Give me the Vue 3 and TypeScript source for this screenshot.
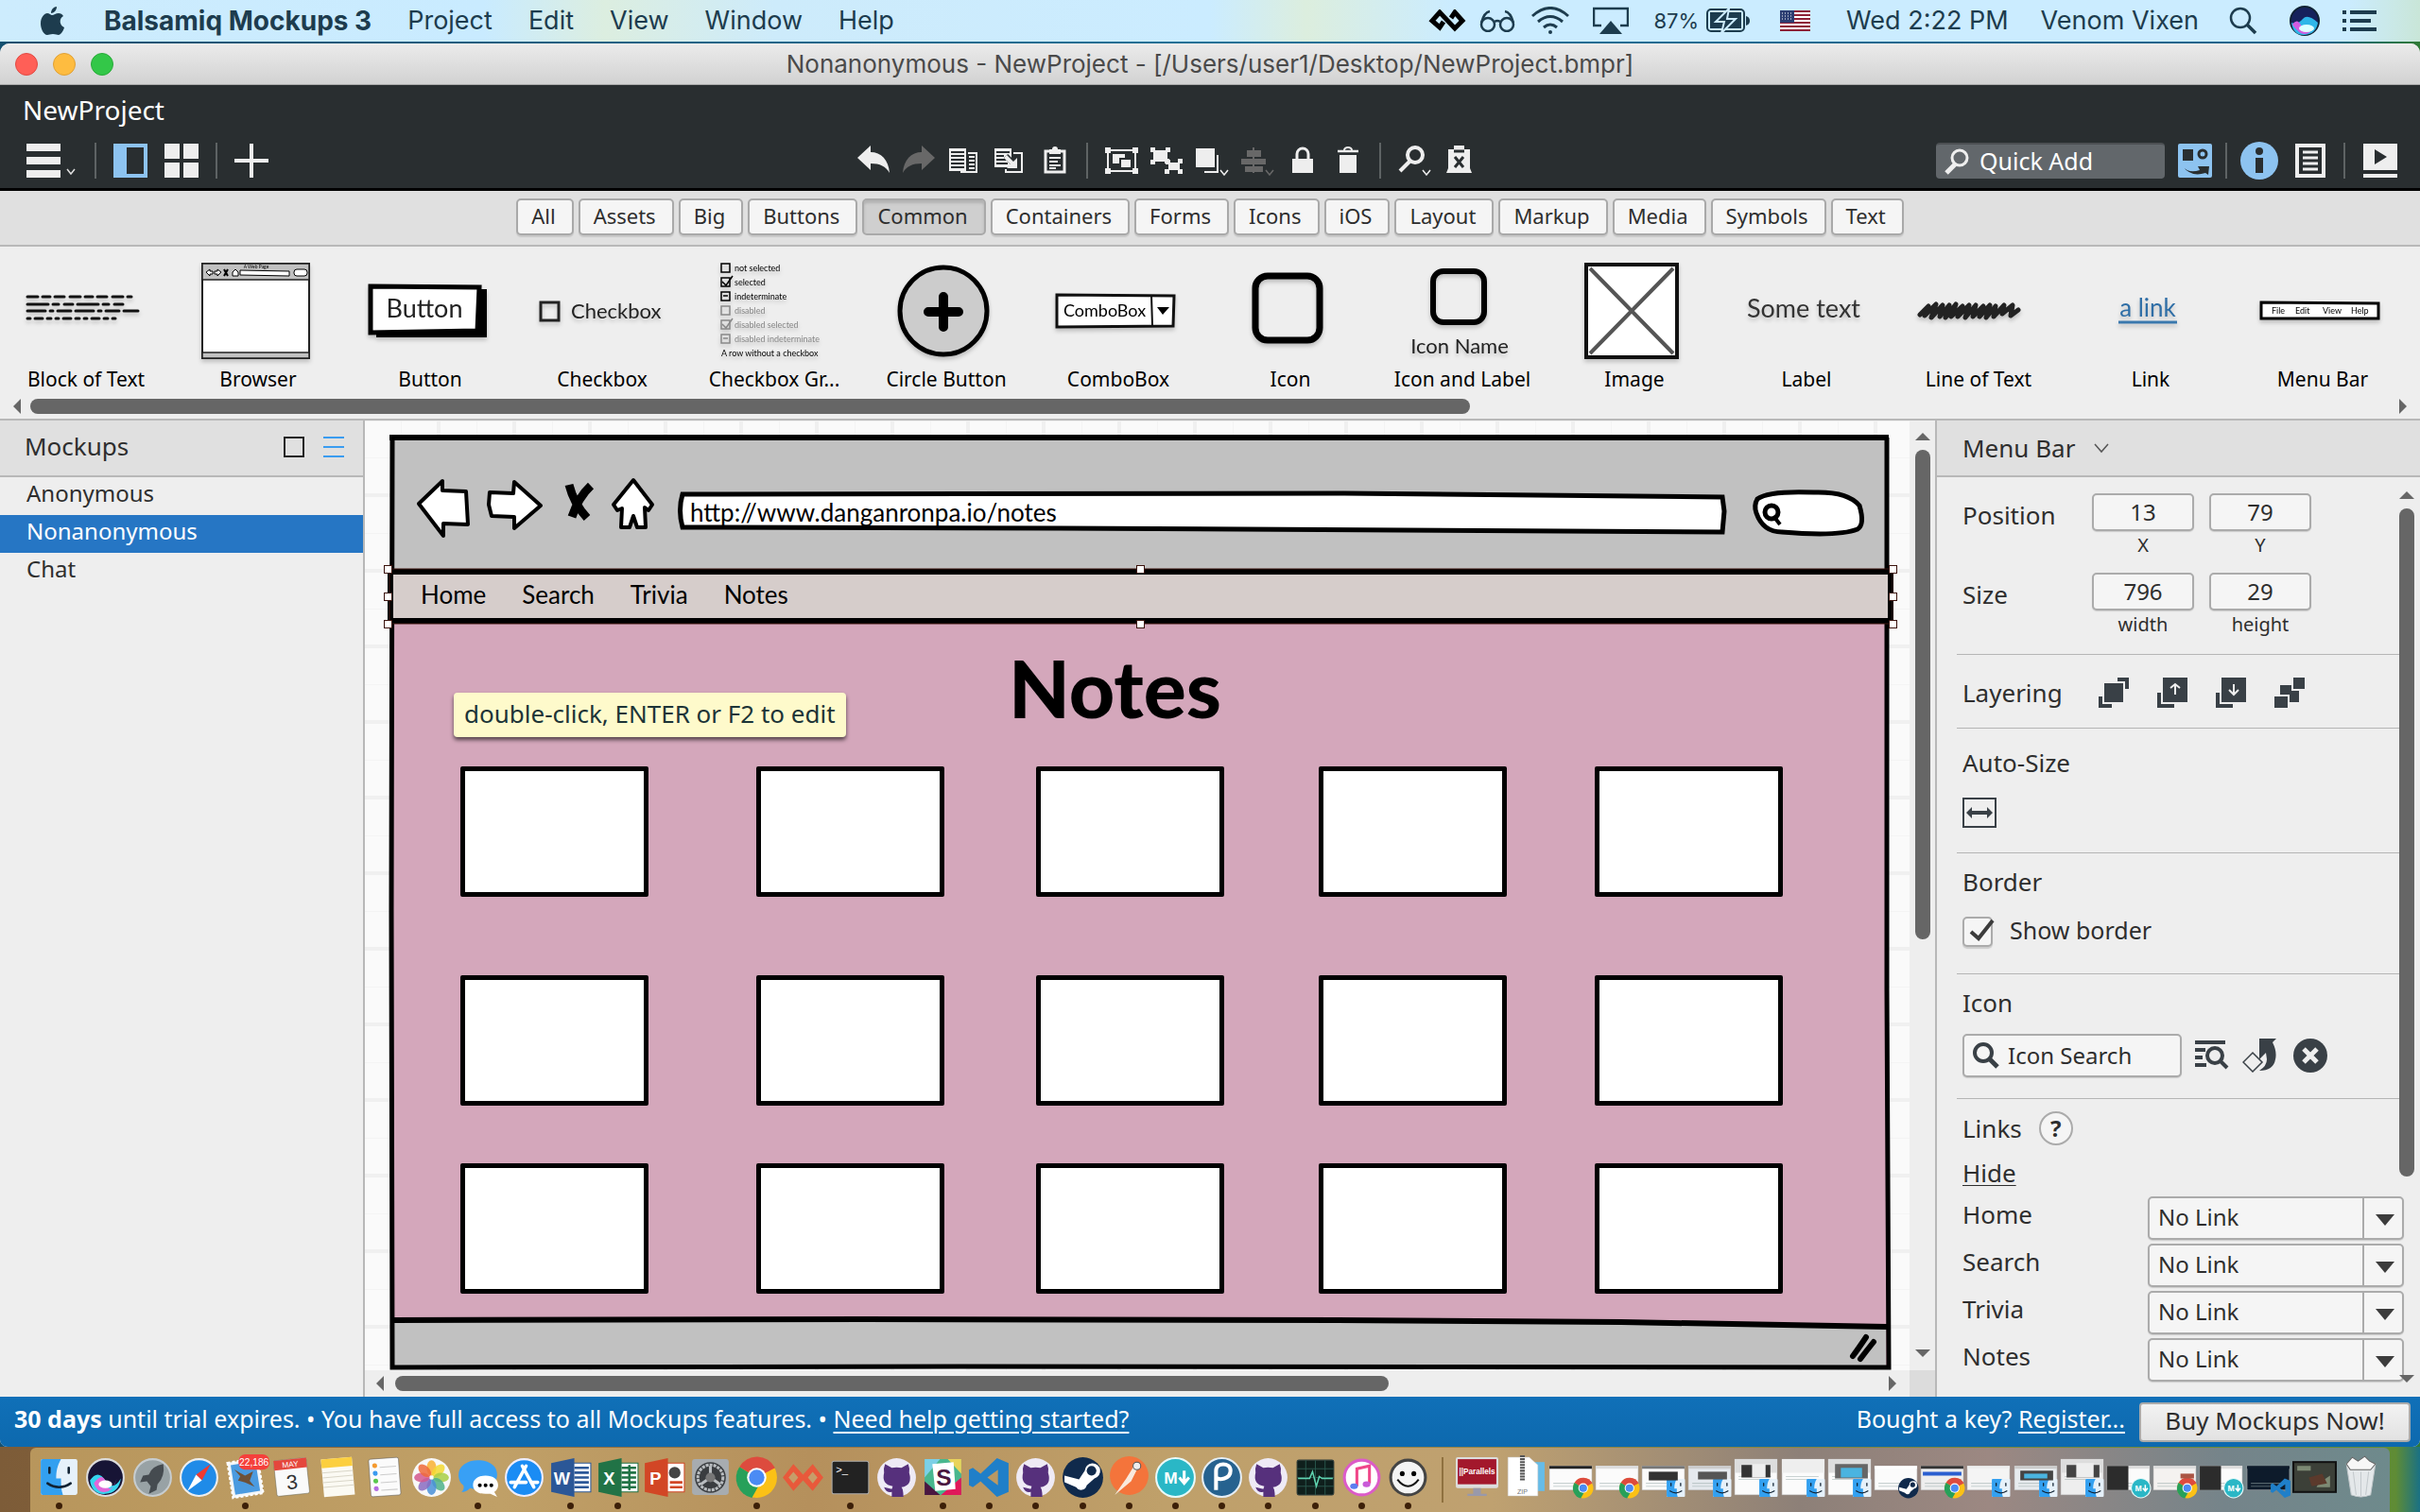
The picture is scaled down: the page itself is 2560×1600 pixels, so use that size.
<script setup lang="ts">
import { ref } from 'vue'

interface DockItem {
  art: string
  name: string
  running?: boolean
}

const systemMenus = ['Project', 'Edit', 'View', 'Window', 'Help']

const categories = [
  'All', 'Assets', 'Big', 'Buttons', 'Common', 'Containers', 'Forms', 'Icons',
  'iOS', 'Layout', 'Markup', 'Media', 'Symbols', 'Text',
]
const activeCategory = ref('Common')

const mockups = ['Anonymous', 'Nonanonymous', 'Chat']
const activeMockup = ref('Nonanonymous')

const position = ref({ x: '13', y: '79' })
const size = ref({ width: '796', height: '29' })
const showBorder = ref(true)
const iconQuery = ref('')
const quickAdd = ref('')

const pageLinks = ['Home', 'Search', 'Trivia', 'Notes']
const linkTargets = ref<Record<string, string>>({
  Home: 'No Link', Search: 'No Link', Trivia: 'No Link', Notes: 'No Link',
})

/* Positions on the free drawing canvas */
const cardColumns = [75, 388, 684, 983, 1275]
const cardRows = [351, 572, 771]
const cards = cardRows.flatMap((top) => cardColumns.map((left) => ({ left, top })))
const handles = [
  [-6, 138], [790, 138], [1586, 138],
  [-6, 167], [1586, 167],
  [-6, 196], [790, 196], [1586, 196],
]

const chevron = '<path d="M0 0l4 5 4-5" transform="translate(27 26)" fill="none" stroke="currentColor" stroke-width="1.5"/>'

const editTools: { name: string; art: string; dim?: boolean }[][] = [
  [
    { name: 'Undo', art: '<path d="M1 13L15 0v7c11 0 19 8 20 22-4-7-10-10-20-10v7z" fill="currentColor"/>' },
    { name: 'Redo', dim: true, art: '<path d="M35 13L21 0v7C10 7 2 15 1 29c4-7 10-10 20-10v7z" fill="currentColor"/>' },
    { name: 'Copy', art: '<path d="M2 3h18v24H2z" fill="currentColor"/><path d="M4 7h14M4 11h14M4 15h14M4 19h14M4 23h14" stroke="#292e30" stroke-width="2"/><path d="M22 8h9v20H14" fill="none" stroke="currentColor" stroke-width="2"/><path d="M23 12h6M23 16h6M23 20h6M23 24h6" stroke="currentColor" stroke-width="2"/>' },
    { name: 'Duplicate', art: '<path d="M2 3h18v20H2z" fill="currentColor"/><path d="M4 7h14M4 11h8M4 15h10M4 19h12" stroke="#292e30" stroke-width="2"/><path d="M22 8h9v20H14v-3" fill="none" stroke="currentColor" stroke-width="2"/><path d="M14 11l9 9" stroke="#292e30" stroke-width="6"/><path d="M26 13v11H15l4-4-7-7 3-3 7 7z" fill="currentColor"/>' },
    { name: 'Paste', art: '<path d="M8 6h20v22H8z" fill="none" stroke="currentColor" stroke-width="3"/><path d="M12 4h3a3 3 0 0 1 6 0h3v5H12z" fill="currentColor"/><path d="M12 13h12M12 17h9M12 21h12M12 24h7" stroke="currentColor" stroke-width="2"/>' },
  ],
  [
    { name: 'Group', art: '<path d="M4 5h29v22H4z" fill="none" stroke="currentColor" stroke-width="2"/><path d="M1 2h6v6H1zM30 2h6v6h-6zM1 24h6v6H1zM30 24h6v6h-6z" fill="currentColor"/><path d="M9 9h13v10H9z" fill="currentColor"/><path d="M17 14h12v10H17z" fill="currentColor" stroke="#292e30" stroke-width="2"/>' },
    { name: 'Ungroup', art: '<path d="M4 5h15v12H4z" fill="currentColor"/><path d="M1 2h5v5H1zM17 2h5v5h-5zM1 15h5v5H1zM17 15h5v5h-5z" fill="currentColor"/><path d="M20 18h12v8H20z" fill="currentColor"/><path d="M16 14h5v5h-5zM30 14h5v5h-5zM16 25h5v5h-5zM30 25h5v5h-5z" fill="currentColor"/>' },
    { name: 'Bring forward', art: '<path d="M1 3h20v20H1z" fill="currentColor"/><path d="M24 10v18H10" fill="none" stroke="currentColor" stroke-width="2"/>' + chevron },
    { name: 'Align', dim: true, art: '<path d="M7 5h15v7H7zM1 14h26v6H1zM5 22h19v6H5z" fill="currentColor"/><path d="M14 2v27" stroke="currentColor" stroke-width="2"/>' + chevron },
    { name: 'Lock', art: '<path d="M7 14h22v15H7z" fill="currentColor"/><path d="M12 15V9a6 6 0 0 1 12 0v6" fill="none" stroke="currentColor" stroke-width="3"/>' },
    { name: 'Delete', art: '<path d="M7 6h22" stroke="currentColor" stroke-width="2.500"/><path d="M14 5a4 3 0 0 1 8 0" fill="none" stroke="currentColor" stroke-width="2"/><path d="M9 10h18v19H9z" fill="currentColor"/>' },
  ],
  [
    { name: 'Zoom', art: '<circle cx="19" cy="10" r="8" fill="none" stroke="currentColor" stroke-width="4"/><path d="M13 17L3 27" stroke="currentColor" stroke-width="4"/>' + chevron },
    { name: 'Clear markup', art: '<path d="M6 4h23v20l2 5H4l2-5z" fill="currentColor"/><path d="M12 0h11v6H12z" fill="currentColor"/><path d="M12 6h11M13 12l9 11M22 12l-9 11" stroke="#292e30" stroke-width="3"/>' },
  ],
]

const box = (x: number, y: number, c: string) =>
  `<rect x="${x}" y="${y}" width="9" height="9" fill="none" stroke="${c}" stroke-width="1.500"/>`
const groupRows = [
  ['not selected', '#000', ''],
  ['selected', '#000', 'M11 8l4 4 7-10'],
  ['indeterminate', '#000', 'M12 8h5'],
  ['disabled', '#888', ''],
  ['disabled selected', '#888', 'M11 8l4 4 7-10'],
  ['disabled indeterminate', '#888', 'M12 8h5'],
]
const checkboxGroup = groupRows
  .map(([t, c, mark], i) =>
    `<g transform="translate(0 ${i * 15})">${box(10, 4, c)}<path d="${mark}" fill="none" stroke="${c}" stroke-width="1.500"/><text x="24" y="12" font-size="9" fill="${c}">${t}</text></g>`)
  .join('') + '<text x="10" y="102" font-size="9">A row without a checkbox</text>'

const library = [
  { name: 'Block of Text', art: '<g fill="none" stroke="#111" stroke-width="3" stroke-linecap="round"><path stroke-dasharray="11 5 8 5 10 6" d="M4 39h110"/><path stroke-dasharray="22 5 6 6 9 5" d="M4 47h105"/><path stroke-dasharray="19 5 3 5 14 5" d="M4 54h117"/><path stroke-dasharray="3 5 8 5 4 5" d="M4 62h96"/></g>' },
  { name: 'Browser', art: '<path d="M7 4h113v100H7z" fill="#fff" stroke="#222" stroke-width="2"/><path d="M7 4h113v17H7zM7 98h113v6H7z" fill="#c1c1c1" stroke="#222" stroke-width="1.500"/><text x="64" y="9" font-size="5" text-anchor="middle">A Web Page</text><path d="M11 13l4-3v2h3v3h-3v2zM27 13l-4-3v2h-3v3h3v2zM39 17v-4l3-3 3 3v4z" fill="#fff" stroke="#000"/><path d="M30 10l4 7M34 10l-4 7" stroke="#000" stroke-width="2"/><path d="M47 11l52 1v5l-52-1z" fill="#fff" stroke="#000"/><rect x="104" y="10" width="14" height="7" rx="3" fill="#fff" stroke="#000"/>' },
  { name: 'Button', art: '<path d="M120 31h6v51H9v-6z" fill="#000"/><path d="M3 28l115 1-2 46L3 77z" fill="#fff" stroke="#000" stroke-width="5"/><text x="60" y="61" font-size="27" text-anchor="middle" fill="#222">Button</text>' },
  { name: 'Checkbox', art: '<rect x="1" y="45" width="19" height="19" fill="none" stroke="#222" stroke-width="3"/><text x="33" y="62" font-size="22" fill="#222">Checkbox</text>' },
  { name: 'Checkbox Gr...', art: checkboxGroup },
  { name: 'Circle Button', art: '<circle cx="63" cy="54" r="46" fill="#ccc" stroke="#000" stroke-width="5"/><path d="M63 39v32M47 55h32" stroke="#000" stroke-width="10" stroke-linecap="round"/>' },
  { name: 'ComboBox', art: '<path d="M1 37l124 1-1 32L1 71z" fill="#fff" stroke="#111" stroke-width="3"/><path d="M101 37l1 33" stroke="#111" stroke-width="2"/><path d="M107 50h13l-7 8z"/><text x="8" y="60" font-size="18">ComboBox</text>' },
  { name: 'Icon', art: '<rect x="29" y="17" width="68" height="68" rx="13" fill="none" stroke="#000" stroke-width="7"/>' },
  { name: 'Icon and Label', art: '<rect x="35" y="12" width="54" height="54" rx="11" fill="none" stroke="#000" stroke-width="6"/><text x="63" y="99" font-size="22" text-anchor="middle" fill="#222">Icon Name</text>' },
  { name: 'Image', art: '<path d="M15 5h96v98H15z" fill="#fff" stroke="#111" stroke-width="4"/><path d="M19 9l88 90M107 9L19 99" stroke="#555" stroke-width="4"/>' },
  { name: 'Label', art: '<text x="63" y="61" font-size="27" text-anchor="middle" fill="#333">Some text</text>' },
  { name: 'Line of Text', art: '<path d="M4 58l9-9-4 10 12-12-5 14 12-13-3 12 10-12-4 13 11-14-5 13 12-11-5 11 12-12-4 13 11-13-3 12 11-11-4 11 11-12-4 13 10-12-2 11 11-12-2 9 11-9-2 11 8-6" fill="none" stroke="#222" stroke-width="5" stroke-linejoin="round" stroke-linecap="round"/>' },
  { name: 'Link', art: '<text x="63" y="60" font-size="26" text-anchor="middle" fill="#2f6ea6">a link</text><path d="M32 66h62" stroke="#3a78ad" stroke-width="3"/>' },
  { name: 'Menu Bar', art: '<path d="M1 45l124 1v16H1z" fill="#fff" stroke="#000" stroke-width="3"/><g font-size="9"><text x="12" y="57">File</text><text x="37" y="57">Edit</text><text x="66" y="57">View</text><text x="96" y="57">Help</text></g>' },
]

/* Dock artwork, each on a 48 x 48 grid */
const petals = ['#f9b233', '#f3d930', '#a8cf45', '#4db28a', '#4a90d9', '#8a6bc1', '#d4588e', '#ef6a3a']
  .map((c, i) => `<ellipse cx="24" cy="14" rx="5" ry="8" fill="${c}" opacity=".85" transform="rotate(${i * 45} 24 24)"/>`)
  .join('')
const chromeArt = '<circle cx="24" cy="24" r="21" fill="#fbc116"/><path d="M24 24L6 13A21 21 0 0 1 43 14z" fill="#dd4b3e"/><path d="M24 24L6 13a21 21 0 0 0 13 32l9-16z" fill="#27a05a"/><circle cx="24" cy="24" r="10" fill="#fff"/><circle cx="24" cy="24" r="8" fill="#4b8bf4"/>'
const finderArt = '<rect x="5" y="5" width="38" height="37" rx="2" fill="#e6f1fa"/><path d="M7 5h19c-4 7-5 13-5 20h5c0 6 0 12 2 17H7a2 2 0 0 1-2-2V7a2 2 0 0 1 2-2z" fill="#33a0f0"/><path d="M14 14v5M34 14v5M12 30q12 8 24 0" fill="none" stroke="#123" stroke-width="2.500" stroke-linecap="round"/>'
const githubArt = '<circle cx="24" cy="24" r="20" fill="#eeeaf5"/><path d="M12 10l7 4q5-1 10 0l7-4q2 5 1 9 4 13-8 15 2 2 2 10H19v-5q-6 1-8-5l8 2 1-3q-12-2-9-14-1-4 1-9z" fill="#56307c"/>'
const office = (letter: string, c: string, lines: string) =>
  `<path d="M26 9h19v30H26z" fill="#fff" stroke="${c}"/><path d="${lines}" stroke="${c}" stroke-width="2.500"/><path d="M4 9l24-5v40L4 39z" fill="${c}"/><text x="15" y="31" font-size="18" font-weight="700" text-anchor="middle" fill="#fff">${letter}</text>`
const steamArt = '<circle cx="24" cy="24" r="21" fill="#102a4c"/><path d="M5 29l12 5a6 6 0 0 0 11-2l8-7a8 8 0 1 0-10-8l-6 9-15-4z" fill="#fff"/><circle cx="33" cy="17" r="5" fill="#102a4c"/>'
const vsArt = '<path d="M32 4l12 5v30l-12 5L15 28l-8 6-4-2V16l4-2 8 6zM33 16l-11 8 11 8z" fill="#1f7fc9" fill-rule="evenodd"/>'
const mdArt = '<circle cx="24" cy="24" r="20" fill="#2ab7c6" stroke="#e8fafa" stroke-width="2"/><text x="19" y="30" font-size="17" font-weight="700" text-anchor="middle" fill="#fff">M</text><path d="M33 17v11M28 24l5 6 5-6" fill="none" stroke="#fff" stroke-width="3"/>'

const badge = (kind: string) => `<g transform="translate(25 23) scale(.5)">${kind}</g>`
const windowArt = (paper: string, head: string, kind: string, tall = false) => {
  const y = tall ? 5 : 12
  const h = tall ? 37 : 25
  return `<rect x="2" y="${y}" width="44" height="${h}" fill="${paper}" stroke="#bbb" stroke-width=".500"/><path d="M2 ${y}h44v${tall ? 14 : 3}H2z" fill="${head}"/><path d="M6 ${y + 18}h34M6 ${y + 21}h26" stroke="#9aa" stroke-width="1" opacity=".5"/>${badge(kind)}`
}

const apps: DockItem[] = [
  { name: 'Finder', art: finderArt, running: true },
  { name: 'Siri', art: '<circle cx="24" cy="24" r="19" fill="#171435" stroke="#ddd" stroke-width="2"/><path d="M8 27q8-12 16 0t16-2q-2 15-16 16T8 27z" fill="#35d5ee"/><path d="M12 30q9-13 13 0t11-5q-4 13-12 14T12 30z" fill="#e066d8"/><ellipse cx="24" cy="31" rx="7" ry="4" fill="#fff"/>' },
  { name: 'Launchpad', art: '<circle cx="24" cy="24" r="19" fill="#98a2a5" stroke="#c7cdd0" stroke-width="2"/><path d="M35 10q-12 2-15 11l-6 1-3 7 7-1 4 5-2 8 8-4 1-6q8-8 6-21z" fill="#454b50"/>' },
  { name: 'Safari', art: '<circle cx="24" cy="24" r="19" fill="#1f8be8" stroke="#eee" stroke-width="2"/><path d="M36 10L27 27l-6-6z" fill="#f03a30"/><path d="M12 38l9-17 6 6z" fill="#fff"/>' },
  { name: 'Mail', art: '<g transform="rotate(-9 24 24)"><rect x="8" y="6" width="32" height="37" fill="#f3f6f8" stroke="#fff" stroke-width="2" stroke-dasharray="3 2"/><rect x="11" y="9" width="26" height="31" fill="#4b9be0"/><path d="M14 14l10 8 9-3-5 9 4 7-9-6-7-3 3-4z" fill="#6e5138"/></g><rect x="17" y="0" width="32" height="16" rx="7" fill="#f5403b"/><text x="33" y="12" font-size="10" text-anchor="middle" fill="#fff">22,186</text>', running: true },
  { name: 'Calendar', art: '<g transform="rotate(-6 24 24)"><rect x="7" y="5" width="34" height="37" rx="2" fill="#fafafa" stroke="#665" stroke-width=".500"/><path d="M7 5h34v10H7z" fill="#e5473c"/><text x="24" y="13" font-size="8" text-anchor="middle" fill="#fff">MAY</text><text x="24" y="36" font-size="21" text-anchor="middle" fill="#333">3</text></g>' },
  { name: 'Notes', art: '<g transform="rotate(-5 24 24)"><rect x="8" y="4" width="32" height="39" fill="#fbfaf3"/><path d="M8 4h32v9H8z" fill="#fccf3e"/><path d="M8 18h32M8 23h32M8 28h32M8 33h32" stroke="#d9d6c8"/></g>' },
  { name: 'Reminders', art: '<g transform="rotate(-4 24 24)"><rect x="8" y="4" width="31" height="39" rx="2" fill="#fbfbfb" stroke="#555" stroke-width=".500"/><circle cx="14" cy="11" r="2.500" fill="#f59a2e"/><circle cx="14" cy="19" r="2.500" fill="#3a9af0"/><circle cx="14" cy="27" r="2.500" fill="#59c84e"/><circle cx="14" cy="35" r="2.500" fill="#b46be0"/><path d="M19 13h17M19 21h17M19 29h17M19 37h17" stroke="#ccc"/></g>' },
  { name: 'Photos', art: '<circle cx="24" cy="24" r="20" fill="#f8f8f8"/>' + petals },
  { name: 'Messages', art: '<path d="M24 6c12 0 20 6 20 15S36 36 24 36c-3 0-5 0-8-1-3 3-6 4-9 4 2-2 3-4 2-7-4-3-5-7-5-11C4 12 13 6 24 6z" fill="#38a0f5"/><path d="M32 22c8 0 13 4 13 10 0 3-2 6-4 7l3 5-7-3h-5c-8 0-13-4-13-9 0-6 5-10 13-10z" fill="#fff"/><circle cx="26" cy="32" r="2"/><circle cx="32" cy="32" r="2"/><circle cx="38" cy="32" r="2"/>', running: true },
  { name: 'App Store', art: '<circle cx="24" cy="24" r="19" fill="#1a8cf4" stroke="#eef" stroke-width="2"/><path d="M26 12L14 34M22 12l12 22M10 29h16M31 29h7" stroke="#fff" stroke-width="3.500" stroke-linecap="round"/>' },
  { name: 'Word', art: office('W', '#2b5797', 'M28 14h15M28 19h15M28 24h15M28 29h15M28 34h15'), running: true },
  { name: 'Excel', art: office('X', '#217346', 'M28 14h15M28 19h15M28 24h15M28 29h15M28 34h15M36 11v26'), running: true },
  { name: 'PowerPoint', art: office('P', '#d24625', 'M30 29h13M30 34h13') + '<circle cx="35" cy="19" r="6" fill="#444"/>' },
  { name: 'System Preferences', art: '<rect x="5" y="5" width="38" height="37" rx="3" fill="#a7acb0"/><circle cx="24" cy="24" r="16" fill="#3a3d40"/><circle cx="24" cy="24" r="13" fill="none" stroke="#b9bdc0" stroke-width="3" stroke-dasharray="3 1"/><path d="M24 24V12M24 24l10 7M24 24l-10 7" stroke="#b9bdc0" stroke-width="3"/><circle cx="24" cy="24" r="5" fill="#777"/>' },
  { name: 'Chrome', art: chromeArt, running: true },
  { name: 'Remote client', art: '<path d="M14 10l10 11 10-11 11 14-11 14-10-11-10 11L3 24z" fill="#e8593b"/><path d="M14 18l5 6-5 6-5-6zM34 18l5 6-5 6-5-6z" fill="#c79d69"/>' },
  { name: 'Terminal', art: '<rect x="5" y="7" width="38" height="34" rx="2" fill="#222" stroke="#aaa"/><text x="9" y="20" font-size="11" fill="#fff">&gt;_</text>', running: true },
  { name: 'GitHub', art: githubArt },
  { name: 'Slack', art: '<path d="M5 5h38v37H5z" fill="#49b78e"/><path d="M5 5h16L5 24z" fill="#7cd0e6"/><path d="M43 5v15L29 5z" fill="#e9d35a"/><path d="M43 42H22l21-18z" fill="#e0185a"/><path d="M5 42V28l16 14z" fill="#4a1640"/><path d="M13 10l22-2 2 28-21 2z" fill="#fff"/><text x="25" y="32" font-size="24" font-weight="700" text-anchor="middle" fill="#4a1640">S</text>', running: true },
  { name: 'Code', art: vsArt, running: true },
  { name: 'GitHub Desktop', art: githubArt, running: true },
  { name: 'Steam', art: steamArt, running: true },
  { name: 'Postman', art: '<circle cx="24" cy="22" r="20" fill="#f4743b"/><path d="M9 42l12-17 8-13 4 2-7 14z" fill="#f9e9dd"/><circle cx="32" cy="12" r="4" fill="#eee" stroke="#555"/>', running: true },
  { name: 'Markdown', art: mdArt, running: true },
  { name: 'Pandora', art: '<circle cx="24" cy="24" r="20" fill="#26628f" stroke="#e5eef5" stroke-width="2"/><path d="M18 37V17c0-9 15-9 15 0s-12 10-15 7" fill="none" stroke="#fff" stroke-width="4"/>', running: true },
  { name: 'GitHub Client', art: githubArt, running: true },
  { name: 'Activity Monitor', art: '<rect x="5" y="6" width="38" height="36" rx="2" fill="#0f1f1c" stroke="#2d3b38"/><path d="M5 15h38M5 24h38M5 33h38M14 6v36M24 6v36M34 6v36" stroke="#28544a"/><path d="M6 25h12l3-7 4 15 3-10 3 2h11" fill="none" stroke="#5fd4b0" stroke-width="1.500"/>', running: true },
  { name: 'iTunes', art: '<circle cx="24" cy="24" r="18" fill="#fff" stroke="#dc5bc8" stroke-width="3"/><path d="M19 33V15l13-3v18" fill="none" stroke="#f0478a" stroke-width="3"/><ellipse cx="16" cy="33" rx="4" ry="3" fill="#5c7df0"/><ellipse cx="29" cy="31" rx="4" ry="3" fill="#c95bd8"/>', running: true },
  { name: 'Balsamiq', art: '<circle cx="24" cy="24" r="18" fill="#f4f4f4" stroke="#444" stroke-width="3"/><circle cx="18" cy="20" r="2.500"/><circle cx="30" cy="20" r="2.500"/><path d="M13 26q11 14 22 0" fill="none" stroke="#111" stroke-width="2"/>', running: true },
]

const white = '#fbfbfb'
const windows: DockItem[] = [
  { name: 'Parallels', art: '<rect x="2" y="3" width="44" height="32" rx="2" fill="#ddd"/><rect x="4" y="5" width="40" height="26" fill="#a3182c"/><text x="24" y="21" font-size="8" font-weight="700" text-anchor="middle" fill="#fff">||Parallels</text><path d="M20 35h8v6h6v2H14v-2h6z" fill="#99a"/>' },
  { name: 'Archive', art: '<rect x="16" y="8" width="30" height="30" fill="#66bce8"/><path d="M8 3h22l9 8v32H8z" fill="#fff" stroke="#ccc" stroke-width=".500"/><path d="M23 1v26" stroke="#555" stroke-width="5" stroke-dasharray="2 1"/><text x="23" y="41" font-size="7" text-anchor="middle" fill="#777">ZIP</text>' },
  { name: 'Window 1', art: windowArt(white, '#222', chromeArt) },
  { name: 'Window 2', art: windowArt(white, '#ddd', chromeArt) },
  { name: 'Window 3', art: windowArt(white, '#777', finderArt) + '<path d="M9 18h30v9H9z" fill="#333"/>' },
  { name: 'Window 4', art: windowArt('#e5e9ee', '#ccc', finderArt) + '<path d="M12 18h30v8H12z" fill="#555"/>' },
  { name: 'Window 5', art: windowArt(white, '#ddd', finderArt, true) + '<path d="M9 11h30v13H9z" fill="#333"/><path d="M20 10h14v14H20z" fill="#eee"/>' },
  { name: 'Window 6', art: windowArt(white, '#eee', finderArt, true) },
  { name: 'Window 7', art: windowArt(white, '#ddd', finderArt, true) + '<path d="M9 10h34v15H9z" fill="#666"/><path d="M15 14h22v10H15z" fill="#4ab4e0"/>' },
  { name: 'Window 8', art: windowArt(white, '#fff', steamArt) },
  { name: 'Window 9', art: windowArt('#eee', '#333', chromeArt) + '<path d="M4 18h40v4H4z" fill="#2b5fd0"/>' },
  { name: 'Window 10', art: windowArt('#f4f4f4', '#eee', finderArt) },
  { name: 'Window 11', art: windowArt('#e8ecef', '#ccc', finderArt) + '<path d="M8 17h34v10H8z" fill="#444"/><path d="M12 20h24v5H12z" fill="#4ab4e0"/>' },
  { name: 'Window 12', art: windowArt('#eee', '#ddd', finderArt, true) + '<path d="M8 11h34v13H8z" fill="#444"/><path d="M18 9h18v15H18z" fill="#eee"/>' },
  { name: 'Window 13', art: windowArt(white, '#ddd', '') + '<path d="M2 12h22v25H2z" fill="#2c2c2c"/>' + badge(mdArt) },
  { name: 'Window 14', art: windowArt('#f4f2f0', '#ddd', chromeArt) + '<path d="M30 20h14v5H30z" fill="#a54"/>' },
  { name: 'Window 15', art: windowArt(white, '#ddd', '') + '<path d="M2 12h22v25H2z" fill="#2c2c2c"/>' + badge(mdArt) },
  { name: 'Window 16', art: windowArt('#0d1b2b', '#0d1b2b', vsArt) },
  { name: 'Window 17', art: '<rect x="2" y="8" width="44" height="31" fill="#3c4038" stroke="#111" stroke-width="2"/><path d="M6 12h14v5H6zM28 30l12-8v12H26z" fill="#7d8a74"/><path d="M18 24l14-4 5 10-16 3z" fill="#5b3a2c"/>' },
  { name: 'Trash', art: '<path d="M9 10h30l-5 32q-10 4-20 0z" fill="#e4e8ea" stroke="#c3c9cc"/><path d="M9 10l6-7 6 4 7-5 5 5 6 3-5 6H13z" fill="#f7f7f7" stroke="#666"/><path d="M16 18l3 24M24 18v25M32 18l-3 24" stroke="#c3c9cc"/>' },
]
</script>

<template>
  <div class="desktop">
    <header class="menubar">
      <svg class="apple" viewBox="0 0 26 32" aria-label="Apple"><path d="M18 1c0 4-3 7-6 7 0-4 3-7 6-7zM13 10c2 0 4-2 7-2 2 0 4 1 5 3-5 3-4 10 1 12-1 4-4 8-6 8s-3-1-6-1-4 1-6 1C4 31 1 24 1 19 1 12 5 8 8 8c2 0 4 2 5 2z" fill="#1d3c4e" /></svg>
      <nav class="menus">
        <a href="#" class="appname">Balsamiq Mockups 3</a>
        <a v-for="m in systemMenus" :key="m" href="#">{{ m }}</a>
      </nav>
      <div class="status">
        <svg width="40" height="24" viewBox="0 0 40 24"><path d="M16 13l-4 6-8-7 8-9 16 17 8-8-8-9-4 6" fill="none" stroke="#000" stroke-width="5" /></svg>
        <svg class="s14" width="38" height="24" viewBox="0 0 38 24" fill="none" stroke="#1d3c4e" stroke-width="2.5"><circle cx="9" cy="16" r="7" /><circle cx="29" cy="16" r="7" /><path d="M16 13q3-2 6 0M2 14Q5 3 11 2M36 14Q33 3 27 2" /></svg>
        <svg class="s16" width="42" height="30" viewBox="0 0 42 30" fill="none" stroke="#1d3c4e" stroke-width="3"><path d="M2 10q19-17 38 0M8 16q13-11 26 0M14 22q7-6 14 0" /><circle cx="21" cy="27" r="2" fill="#1d3c4e" stroke="none" /></svg>
        <svg class="s24" width="38" height="30" viewBox="0 0 38 30"><path d="M9 20H1V2h36v18h-8" fill="none" stroke="#1d3c4e" stroke-width="2.5" /><path d="M19 15l12 14H7z" fill="#1d3c4e" /></svg>
        <span class="percent">87%</span>
        <svg class="s8" width="46" height="26" viewBox="0 0 46 26"><rect x="1" y="1" width="39" height="23" rx="4" fill="none" stroke="#1d3c4e" stroke-width="2" /><path d="M4 4h33v17H4z" fill="#1d3c4e" /><path d="M42 8q4 1 4 5t-4 5z" fill="#1d3c4e" /><path d="M24 0L10 14h9l-3 12 15-15h-9z" fill="#1d3c4e" stroke="#cdecfd" stroke-width="2" /></svg>
        <svg class="s32" width="32" height="22" viewBox="0 0 32 22"><path d="M0 0h32v22H0z" fill="#fff" /><path d="M0 1h32M0 5h32M0 9h32M0 13h32M0 17h32M0 21h32" stroke="#8d2238" stroke-width="2" /><path d="M0 0h15v13H0z" fill="#2c3e72" /><path d="M2 3h12M2 6h12M2 9h12" stroke="#fff" stroke-dasharray="1 2" /></svg>
        <span class="clock">Wed 2:22 PM</span>
        <span class="user">Venom Vixen</span>
        <svg class="s32" width="30" height="30" viewBox="0 0 30 30" fill="none" stroke="#1d3c4e"><circle cx="12" cy="12" r="10" stroke-width="2.5" /><path d="M19 19l9 9" stroke-width="3.500" /></svg>
        <svg class="s34" width="32" height="32" viewBox="0 0 32 32"><circle cx="16" cy="16" r="15" fill="#16225c" stroke="#123" stroke-width="2" /><path d="M2 18q7 2 12-4t16 4q-2 12-14 13T2 18z" fill="#2fb6e8" /><path d="M3 20q5-8 10 2t12 1q-3 7-9 7T3 20z" fill="#d25be0" /><ellipse cx="18" cy="24" rx="8" ry="4" fill="#dff" /></svg>
        <svg class="s24" width="36" height="22" viewBox="0 0 36 22"><path d="M0 2h4M8 2h28M0 11h4M8 11h22M0 20h4M8 20h28" stroke="#1d3c4e" stroke-width="4" /></svg>
      </div>
    </header>

    <div class="window">
      <div class="titlebar">
        <div class="lights"><button class="light red" aria-label="Close"></button><button class="light amber" aria-label="Minimise"></button><button class="light green" aria-label="Zoom"></button></div>
        <span class="wtitle">Nonanonymous - NewProject - [/Users/user1/Desktop/NewProject.bmpr]</span>
      </div>

      <div class="toolbar">
        <div class="project">NewProject</div>
        <div class="tools">
          <div class="tools-left">
            <button class="tool" aria-label="Menu"><svg width="54" height="36" viewBox="0 0 54 36"><path d="M0 0h36v8H0zM0 14h36v8H0zM0 28h36v8H0z" fill="#eee" /><path d="M43 27l4 5 4-5" fill="none" stroke="#ddd" stroke-width="1.500" /></svg></button>
            <i class="sep wide"></i>
            <button class="tool" aria-label="Show navigator"><svg width="36" height="36"><path d="M0 0h36v36H0zM14 4v28h18V4z" fill="#8dc3f0" fill-rule="evenodd" /></svg></button>
            <button class="tool grid" aria-label="Grid view"><svg width="36" height="36"><path d="M0 0h16v16H0zM20 0h16v16H20zM0 20h16v16H0zM20 20h16v16H20z" fill="#eee" /></svg></button>
            <i class="sep wide"></i>
            <button class="tool" aria-label="New mockup"><svg width="36" height="36"><path d="M0 16h36v4H0zM16 0h4v36h-4z" fill="#eee" /></svg></button>
          </div>
          <div class="tools-mid">
            <template v-for="(g, i) in editTools" :key="i">
              <i v-if="i > 0" class="sep"></i>
              <button v-for="t in g" :key="t.name" class="tool edit" :class="{ dim: t.dim }" :aria-label="t.name">
                <svg width="36" height="32" viewBox="0 0 36 32" v-html="t.art"></svg>
              </button>
            </template>
          </div>
          <div class="tools-right">
            <label class="quick">
              <svg width="28" height="30" viewBox="0 0 28 30"><circle cx="17" cy="11" r="8" fill="none" stroke="#eee" stroke-width="3" /><path d="M12 18L3 27" stroke="#eee" stroke-width="5" /></svg>
              <input v-model="quickAdd" type="text" placeholder="Quick Add" aria-label="Quick Add" />
            </label>
            <button class="tool" aria-label="UI Library"><svg width="36" height="36"><rect width="36" height="36" rx="2" fill="#8dc3f0" /><path d="M5 6h11v12H5z" fill="#292e30" /><circle cx="26" cy="11" r="4" fill="none" stroke="#292e30" stroke-width="3" /><path d="M5 24q6 8 18 4l-2-4h12l-1 9-3-2Q14 36 5 24z" fill="#292e30" /></svg></button>
            <i class="sep"></i>
            <button class="tool" aria-label="Inspector"><svg width="40" height="40"><circle cx="20" cy="20" r="20" fill="#8dc3f0" /><circle cx="20" cy="10" r="4" fill="#292e30" /><path d="M16 17h8v16h-8z" fill="#292e30" /></svg></button>
            <button class="tool notes" aria-label="Project information"><svg width="32" height="36"><path d="M2 2h28v32H2z" fill="none" stroke="#eee" stroke-width="4" /><path d="M8 9h16M8 15h16M8 21h16M8 27h16" stroke="#eee" stroke-width="3" /></svg></button>
            <i class="sep wide"></i>
            <button class="tool" aria-label="Present"><svg width="36" height="36"><path d="M0 0h36v28H0zM0 32h36v4H0z" fill="#eee" /><path d="M12 6l13 8-13 8z" fill="#292e30" /></svg></button>
          </div>
        </div>
      </div>

      <div class="categories">
        <button v-for="c in categories" :key="c" :class="{ on: c === activeCategory }" @click="activeCategory = c">{{ c }}</button>
      </div>

      <div class="library">
        <div class="shelf">
          <button v-for="c in library" :key="c.name" class="control">
            <svg width="126" height="108" viewBox="0 0 126 108" v-html="c.art"></svg>
            <span>{{ c.name }}</span>
          </button>
        </div>
        <div class="hscroll"><i class="tri left"></i><div class="rail"><i class="thumb"></i></div><i class="tri right"></i></div>
      </div>

      <main class="work">
        <aside class="navigator">
          <div class="head">
            <h2>Mockups</h2>
            <button aria-label="Thumbnails"><svg width="22" height="22"><path d="M1 1h20v20H1z" fill="none" stroke="#222" stroke-width="2" /></svg></button>
            <button aria-label="List"><svg width="22" height="22"><path d="M0 1h22M0 11h22M0 21h22" stroke="#3a9cf0" stroke-width="2" /></svg></button>
          </div>
          <button v-for="m in mockups" :key="m" class="entry" :class="{ on: m === activeMockup }" @click="activeMockup = m">{{ m }}</button>
        </aside>

        <section class="stage">
          <div class="canvas">
            <div class="mockup">
              <svg class="frame" width="1590" height="990" viewBox="0 0 1590 990">
                <path d="M2 3h1582v985H3z" fill="#d4a7bb" />
                <path d="M2 3h1582v140H2zM3 937h900l680 5v45H3z" fill="#c1c1c1" />
                <path d="M3 937l500-1 500 1 300 2 281 5" fill="none" stroke="#000" stroke-width="6" />
                <path d="M0 3h1586" stroke="#000" stroke-width="6" />
                <path d="M3 3l-1 500 1 484 600-1 983 1-2-400V3" fill="none" stroke="#000" stroke-width="5" />
                <g fill="#fff" stroke="#000" stroke-width="4" stroke-linejoin="round">
                  <path d="M31 74l25-24v10l25 1 2 35-26-1v13z" transform="translate(0 -1)" />
                  <path d="M106 61l25 1 1-12 28 25-28 24v-12l-24-1-3-12z" />
                  <path d="M258 48l20 26-4 6-4-3 1 21h-9l-4-12-4 12h-9l1-20-5 2-4-6z" />
                </g>
                <path d="M190 53q5 20 19 35M213 54q-13 12-20 33" fill="none" stroke="#000" stroke-width="9" />
                <path d="M310 63l700-1 400 4 2 15-2 22-700-4-400-1q-5-18 0-35z" fill="#fff" stroke="#000" stroke-width="5" />
                <path d="M1447 68q12-9 60-7 36-1 48 14 6 20-2 25-20 8-80 3-20 0-27-20-3-8 1-15z" fill="#fff" stroke="#000" stroke-width="5" />
                <circle cx="1462" cy="82" r="7" fill="none" stroke="#000" stroke-width="5" /><path d="M1464 86l7 9" stroke="#000" stroke-width="4" />
                <path d="M1548 975q6-8 14-20M1556 978q6-8 14-18" stroke="#000" stroke-width="6" stroke-linecap="round" fill="none" />
                <path d="M1 145h1587v52H1z" fill="#d6cdcb" stroke="#000" stroke-width="6" />
                <path d="M0 142h1590v58H0z" fill="none" stroke="#3a120c" stroke-width="1" />
              </svg>
              <span class="url">http://www.danganronpa.io/notes</span>
              <nav class="pagenav"><a v-for="l in pageLinks" :key="l" href="#">{{ l }}</a></nav>
              <h1>Notes</h1>
              <i v-for="(c, i) in cards" :key="i" class="card" :style="{ left: c.left + 'px', top: c.top + 'px' }"></i>
              <i v-for="(h, i) in handles" :key="'h' + i" class="handle" :style="{ left: h[0] + 'px', top: h[1] + 'px' }"></i>
              <div class="tip">double-click, ENTER or F2 to edit</div>
            </div>
          </div>
          <div class="vscroll"><i class="tri up"></i><div class="rail"><i class="thumb"></i></div><i class="tri down"></i></div>
          <div class="hscroll"><i class="tri left"></i><div class="rail"><i class="thumb"></i></div><i class="tri right"></i></div>
          <div class="corner"></div>
        </section>

        <aside class="inspector">
          <div class="head"><h2>Menu Bar</h2><svg width="16" height="12" viewBox="0 0 16 12"><path d="M1 2l7 8 7-8" fill="none" stroke="#555" stroke-width="1.500" /></svg></div>
          <div class="scroller">
            <form class="props" @submit.prevent>
              <section class="geometry">
                <span class="name">Position</span>
                <label><input v-model="position.x" type="text" />X</label>
                <label><input v-model="position.y" type="text" />Y</label>
                <span class="name">Size</span>
                <label><input v-model="size.width" type="text" />width</label>
                <label><input v-model="size.height" type="text" />height</label>
              </section>
              <section class="layering">
                <span>Layering</span>
                <button aria-label="Bring to front"><svg width="32" height="32"><path d="M6 6h20v20H6zM20 0h12v12h-4V4h-8zM0 20h4v8h10v4H0z" fill="#394046" /></svg></button>
                <button aria-label="Bring forward"><svg width="32" height="32"><path d="M6 0h26v26H6zM0 16h4v12h14v4H0z" fill="#394046" /><path d="M19 18V7M14 11l5-4 5 4" fill="none" stroke="#eee" stroke-width="2" /></svg></button>
                <button aria-label="Send backward"><svg width="32" height="32"><path d="M6 0h26v26H6zM0 16h4v12h14v4H0z" fill="#394046" /><path d="M19 7v11M14 13l5 5 5-5" fill="none" stroke="#eee" stroke-width="2" /></svg></button>
                <button aria-label="Send to back"><svg width="32" height="32"><path d="M20 0h12v12H20zM6 8h12v6h8v12H16v-8H6zM0 20h14v12H0z" fill="#394046" /></svg></button>
              </section>
              <section class="autosize">
                <span>Auto-Size</span>
                <button aria-label="Auto-size width"><svg width="36" height="32"><path d="M1 1h34v30H1z" fill="none" stroke="#394046" stroke-width="2" /><path d="M6 16h24" stroke="#394046" stroke-width="4" /><path d="M4 16l6-6v12zM32 16l-6-6v12z" fill="#394046" /></svg></button>
              </section>
              <section class="border">
                <span>Border</span>
                <label class="check"><input v-model="showBorder" type="checkbox" /><svg width="36" height="34" viewBox="0 0 36 34"><path d="M9 16l8 7L32 4" fill="none" stroke="#3c3c3c" stroke-width="4" /></svg>Show border</label>
              </section>
              <section class="icon">
                <span>Icon</span>
                <div class="iconrow">
                  <label><svg width="30" height="30" viewBox="0 0 30 30"><circle cx="12" cy="12" r="9" fill="none" stroke="#394046" stroke-width="4" /><path d="M18 18l9 9" stroke="#394046" stroke-width="5" /></svg><input v-model="iconQuery" type="text" placeholder="Icon Search" aria-label="Icon Search" /></label>
                  <button aria-label="Browse icons"><svg width="36" height="36"><path d="M0 2h32v4H0zM0 10h11v4H0zM0 18h8v4H0zM0 26h12v4H0z" fill="#394046" /><circle cx="21" cy="18" r="8" fill="none" stroke="#394046" stroke-width="4" /><path d="M27 24l7 7" stroke="#394046" stroke-width="4" /></svg></button>
                  <button aria-label="Rotate"><svg width="36" height="36"><path d="M11 15l10 10-10 10L1 25z" fill="none" stroke="#394046" stroke-width="1.500" /><path d="M18 0h18l-4 4q5 10 3 18-2 12-17 12 8-5 8-12l-1-7-7 7z" fill="#394046" /></svg></button>
                  <button aria-label="Clear icon"><svg width="36" height="36"><circle cx="18" cy="18" r="18" fill="#394046" /><path d="M11 11l14 14M25 11L11 25" stroke="#eee" stroke-width="5" /></svg></button>
                </div>
              </section>
              <section class="links">
                <div class="linkhead"><span>Links</span><button>?</button></div>
                <a href="#">Hide</a>
                <label v-for="l in pageLinks" :key="l" class="linkrow">
                  <span class="name">{{ l }}</span>
                  <span class="combo"><select v-model="linkTargets[l]"><option>No Link</option></select><i></i></span>
                </label>
              </section>
            </form>
            <div class="vscroll panel"><i class="tri up"></i><div class="rail"><i class="thumb"></i></div><i class="tri down"></i></div>
          </div>
        </aside>
      </main>

      <footer class="trial">
        <p><b>30 days</b> until trial expires. • You have full access to all Mockups features. • <a href="#">Need help getting started?</a></p>
        <p class="key">Bought a key? <a href="#">Register...</a></p>
        <button>Buy Mockups Now!</button>
      </footer>
    </div>

    <div class="shelfwrap">
      <div class="dock">
        <button v-for="a in apps" :key="a.name" class="slot" :aria-label="a.name"><svg viewBox="0 0 48 48" v-html="a.art"></svg><i v-if="a.running"></i></button>
        <hr />
        <button v-for="a in windows" :key="a.name" class="slot" :aria-label="a.name"><svg viewBox="0 0 48 48" v-html="a.art"></svg></button>
      </div>
    </div>
  </div>
</template>

<style>
html, body { margin: 0; overflow: hidden; }
</style>

<style scoped>
* { box-sizing: border-box; }
.desktop {
  display: flex; flex-direction: column; height: 100vh; overflow: hidden;
  font: 24px/32px "Noto Sans", "Open Sans", sans-serif; color: #2e2e2e;
  background: linear-gradient(90deg, #14506f, #1d7196 50%, #17628a 96%, #2f7a35);
}
button { margin: 0; padding: 0; border: 0; background: none; font: inherit; color: inherit; }
svg { display: block; flex: none; }
i { display: block; flex: none; }
h1, h2, p { margin: 0; font-weight: 400; }
a { color: inherit; }

.menubar {
  flex: none; height: 44px; display: flex; align-items: center; padding: 0 46px 0 42px;
  background: linear-gradient(90deg, #cdecfd, #c9ebff 20%, #dceee0 25%, #cdebfb 32%, #cbecff 50%, #dceede 54%, #cbecff 60%, #cbecff 97%, #c9e6d8);
  font: 27px/32px Inter, sans-serif; color: #1d3c4e;
}
.apple { width: 26px; height: 32px; }
.menus { display: flex; gap: 38px; margin-left: 42px; }
.menus a { text-decoration: none; }
.menus .appname { font-weight: 700; font-size: 28px; }
.status { display: flex; align-items: center; margin-left: auto; white-space: nowrap; }
.s8 { margin-left: 8px; } .s14 { margin-left: 14px; } .s16 { margin-left: 16px; }
.s24 { margin-left: 24px; } .s32 { margin-left: 32px; } .s34 { margin-left: 34px; }
.percent { margin-left: 26px; font-size: 22px; }
.clock { margin-left: 38px; }
.user { margin-left: 34px; }

.window { flex: 1; min-height: 0; margin-top: 2px; display: flex; flex-direction: column; border-radius: 10px 10px 8px 8px; overflow: hidden; background: #eee; }
.titlebar { flex: none; height: 44px; display: grid; grid-template-columns: 1fr auto 1fr; align-items: center; padding: 0 16px; background: linear-gradient(#ebebeb, #d2d2d2); border-bottom: 1px solid #aaa; }
.lights { display: flex; gap: 16px; }
.light { width: 24px; height: 24px; border-radius: 50%; border: 1px solid; }
.red { background: #ff5f57; border-color: #e04a43; }
.amber { background: #febc40; border-color: #dfa035; }
.green { background: #33c748; border-color: #29ab3a; }
.wtitle { font: 26px/32px Inter, sans-serif; color: #4a4a4a; }

.toolbar { flex: none; height: 112px; background: #292e30; border-bottom: 3px solid #000; color: #fff; }
.project { padding: 8px 24px 0; font-size: 28px; line-height: 36px; }
.tools { display: grid; grid-template-columns: 1fr auto 1fr; align-items: center; height: 40px; margin-top: 16px; padding: 0 24px 0 28px; }
.tools-left, .tools-mid, .tools-right { display: flex; align-items: center; }
.tools-mid { margin-right: 96px; }
.tools-right { justify-content: flex-end; }
.sep { width: 2px; height: 38px; margin: 0 11px 0 9px; background: #5e6364; }
.sep.wide { margin: 0 18px; }
.tool.grid { margin-left: 18px; }
.tool.notes { margin-left: 18px; }
.tool.edit { width: 48px; display: flex; justify-content: center; color: #eee; }
.tool.dim { color: #686868; }
.tools-right .sep { margin: 0 14px; }
.tools-right .sep.wide { margin: 0 19px; }
.quick { display: flex; align-items: center; gap: 10px; width: 242px; height: 38px; margin-right: 14px; padding: 0 8px; border-radius: 4px; background: #62676b; border-top: 2px solid #4c5053; }
.quick input, .iconrow input { min-width: 0; flex: 1; padding: 0; border: 0; outline: 0; background: none; font: inherit; color: inherit; }
.quick input { font-size: 25px; padding-bottom: 3px; }
.quick input::placeholder { color: #fff; opacity: 1; }

.categories { flex: none; height: 59px; display: flex; justify-content: center; gap: 5px; padding-top: 8px; background: #e0e0e0; border-bottom: 2px solid #b8b8b8; }
.categories button { height: 39px; padding: 0 17px 3px 14px; border: 2px solid #a9a9a9; border-radius: 5px; background: #f5f5f5; font-size: 22px; line-height: 32px; box-shadow: 0 2px 1px #c8c8c8; }
.categories .on { background: #cfcfcf; box-shadow: inset 0 3px 3px #b2b2b2; }

.library { flex: none; height: 184px; border-bottom: 2px solid #b8b8b8; }
.shelf { display: flex; padding-right: 12px; height: 160px; }
.control { flex: 1 1 0; min-width: 0; display: flex; flex-direction: column; align-items: center; padding-top: 14px; font-size: 21px; line-height: 28px; color: #000; white-space: nowrap; }
.control svg { margin-right: 6px; overflow: visible; font-family: Lato, sans-serif; filter: drop-shadow(0 3px 2px rgba(0, 0, 0, .2)); }
.control span { margin-top: 4px; }

.hscroll { display: flex; align-items: center; gap: 10px; height: 18px; padding: 0 14px; }
.rail { flex: 1; display: flex; }
.thumb { border-radius: 8px; background: #666; }
.hscroll .thumb { height: 16px; }
.library .thumb { width: 61%; }
.tri { border: 8px solid transparent; }
.left { border-left: 0; border-right-color: #666; }
.right { border-right: 0; border-left-color: #666; }
.up { border-top: 0; border-bottom-color: #666; }
.down { border-bottom: 0; border-top-color: #666; }

.work { flex: 1; min-height: 0; display: flex; }
.head { display: flex; align-items: center; height: 60px; background: #e0e0e0; border-bottom: 2px solid #b8b8b8; }
.head h2 { font-size: 26px; line-height: 32px; }
.navigator { flex: none; width: 386px; border-right: 2px solid #b8b8b8; }
.navigator .head { gap: 20px; padding: 0 20px 2px 26px; }
.navigator h2 { margin-right: auto; padding-bottom: 2px; }
.entry { display: block; width: 100%; height: 40px; padding: 0 28px 6px; text-align: left; line-height: 32px; }
.entry.on { background: #2676c4; color: #fff; }

.stage { flex: 1; min-width: 0; display: grid; grid-template: minmax(0, 1fr) 28px / minmax(0, 1fr) 27px; }
.canvas {
  position: relative; overflow: hidden; background-color: #fafafa;
  background-image: linear-gradient(90deg, #f0f0f0 4px, transparent 4px), linear-gradient(#f0f0f0 4px, transparent 4px), linear-gradient(90deg, #f4f4f4 1px, transparent 1px), linear-gradient(#f4f4f4 1px, transparent 1px);
  background-size: 80px 80px, 80px 80px, 40px 40px, 40px 40px;
  background-position: 76px 0, 0 77px, 38px 0, 0 39px;
}
.mockup { position: absolute; left: 26px; top: 15px; width: 1590px; height: 990px; font-family: Lato, "Open Sans", sans-serif; color: #000; }
.frame { overflow: visible; }
.url, .pagenav, .mockup h1, .card, .handle, .tip { position: absolute; }
.url { left: 318px; top: 66px; font-size: 26px; }
.pagenav { left: 33px; top: 153px; display: flex; gap: 38px; }
.pagenav a { text-decoration: none; font-size: 26px; }
.mockup h1 { left: 655px; top: 218px; font-size: 84px; line-height: 100px; font-weight: 900; }
.card { width: 199px; height: 138px; border: 5px solid #000; border-radius: 2px; background: #fff; }
.handle { width: 9px; height: 9px; border: 1px solid #3a120c; background: #fff; }
.tip { left: 68px; top: 273px; padding: 6px 11px 9px; border-radius: 4px; background: #fefacb; color: #1d3437; font: 26px/32px "Noto Sans", sans-serif; box-shadow: 0 3px 4px rgba(0, 0, 0, .6); white-space: nowrap; }
.vscroll { display: flex; flex-direction: column; align-items: center; gap: 10px; padding: 13px 0 14px; }
.vscroll .rail { flex: 1; }
.vscroll .thumb { width: 16px; height: 55%; }
.stage .hscroll { height: 28px; padding: 0 14px 0 12px; gap: 12px; }
.stage .hscroll .thumb { width: 67%; }
.corner { background: #dcdcdc; }

.inspector { flex: none; width: 513px; display: flex; flex-direction: column; border-left: 2px solid #b8b8b8; font-size: 26px; }
.inspector .head { flex: none; gap: 20px; padding-left: 27px; }
.scroller { flex: 1; min-height: 0; display: flex; overflow: hidden; }
.props { flex: 1; min-width: 0; padding-left: 21px; }
.props section { padding-left: 6px; border-bottom: 1px solid #b5b5b5; }
.props .links { border: 0; }
.geometry { display: grid; grid-template-columns: 137px 124px 108px; row-gap: 17px; padding-top: 17px; padding-bottom: 19px; }
.geometry .name { padding-top: 7px; }
.geometry label { width: 108px; display: flex; flex-direction: column; align-items: center; gap: 3px; font-size: 20px; line-height: 24px; }
.geometry input { width: 108px; height: 40px; padding: 0 0 2px; text-align: center; font: 24px/32px "Noto Sans", sans-serif; color: inherit; }
.geometry input, .iconrow label, .combo select { border: 2px solid #ababab; border-radius: 5px; background: #f5f5f5; box-shadow: 0 1px 1px #ccc; }
.layering { display: flex; align-items: center; gap: 30px; padding-top: 24px; padding-bottom: 21px; }
.layering span { width: 114px; }
.autosize { display: flex; flex-direction: column; align-items: flex-start; gap: 21px; padding-top: 20px; padding-bottom: 26px; }
.border { display: flex; flex-direction: column; gap: 21px; padding-top: 14px; padding-bottom: 28px; }
.check { display: grid; grid-template-columns: 50px auto; height: 32px; line-height: 28px; font-size: 25px; justify-content: start; }
.check input { appearance: none; grid-area: 1 / 1; margin: 0; width: 32px; height: 32px; border: 2px solid #ababab; border-radius: 5px; background: #f5f5f5; box-shadow: 0 2px 1px #ccc; }
.check svg { grid-area: 1 / 1; visibility: hidden; position: relative; }
.check input:checked + svg { visibility: visible; }
.icon { display: flex; flex-direction: column; gap: 17px; padding-top: 14px; padding-bottom: 22px; }
.iconrow { display: flex; align-items: center; gap: 14px; }
.iconrow label { display: flex; align-items: center; gap: 8px; width: 232px; height: 46px; padding: 0 8px; font-size: 24px; }
.iconrow button:last-child { margin-left: 4px; }
.iconrow input::placeholder { color: #2e2e2e; opacity: 1; }
.links { display: flex; flex-direction: column; padding-top: 13px; }
.linkhead { display: flex; align-items: center; gap: 18px; height: 36px; }
.linkhead button { width: 36px; height: 36px; border: 2px solid #ababab; border-radius: 50%; background: #f5f5f5; font-weight: 700; font-size: 24px; line-height: 32px; }
.links a { align-self: flex-start; margin: 13px 0 9px; text-underline-offset: 3px; text-decoration-thickness: 1px; }
.linkrow { display: flex; height: 46px; margin-bottom: 4px; }
.linkrow .name { flex: none; width: 196px; padding-top: 3px; }
.combo { position: relative; flex: none; width: 271px; height: 46px; z-index: 0; }
.combo select { appearance: none; width: 100%; height: 100%; padding: 0 9px 2px; font: 24px/32px "Noto Sans", sans-serif; color: inherit; }
.combo i { position: absolute; right: 0; top: 2px; width: 44px; height: 42px; border-left: 2px solid #ababab; pointer-events: none; }
.combo i::after { content: ""; position: absolute; left: 12px; top: 17px; border: 10px solid transparent; border-bottom: 0; border-top: 12px solid #3c3c3c; }
.vscroll.panel { flex: none; width: 16px; margin-right: 6px; padding: 15px 0; position: relative; z-index: 1; }
.vscroll.panel .thumb { height: 78%; }

.trial { flex: none; height: 53px; display: flex; align-items: center; padding: 0 10px 0 15px; background: linear-gradient(#1070b8, #0d69ae); color: #fff; }
.trial p { padding-bottom: 8px; font-size: 25px; }
.trial a { text-underline-offset: 4px; text-decoration-thickness: 2px; }
.trial .key { margin-left: auto; }
.trial button { width: 287px; height: 42px; margin-left: 15px; padding-bottom: 3px; border: 2px solid #aaa; border-radius: 4px; background: linear-gradient(#f2f2f2, #e2e2e2); color: #2e2e2e; font-size: 26px; line-height: 32px; }

.shelfwrap { flex: none; height: 69px; padding: 1px 32px 0; background: linear-gradient(90deg, #7d5c38, #a5814a 50%, #5f8c35 99%, #1a7184); }
.dock { display: flex; height: 68px; padding: 0 6px; border-radius: 6px 6px 0 0; background: linear-gradient(90deg, #b8965c, #c0a067 20%, #b5905c 33%, #bfa06a 48%, #bfa170 62%, #8d8078 75%, #9c8882 83%, #75848a 93%, #6e8a8c); }
.slot { flex: 1 1 0; min-width: 0; display: flex; flex-direction: column; align-items: center; padding-top: 7px; }
.slot svg { width: 49px; height: 49px; overflow: visible; font-family: "Liberation Sans", sans-serif; }
.slot i { width: 7px; height: 7px; margin-top: 2px; border-radius: 50%; background: #3c1f08; }
.dock hr { flex: none; width: 2px; height: 48px; margin: 10px 11px 0; border: 0; background: #8f713f; }
</style>
